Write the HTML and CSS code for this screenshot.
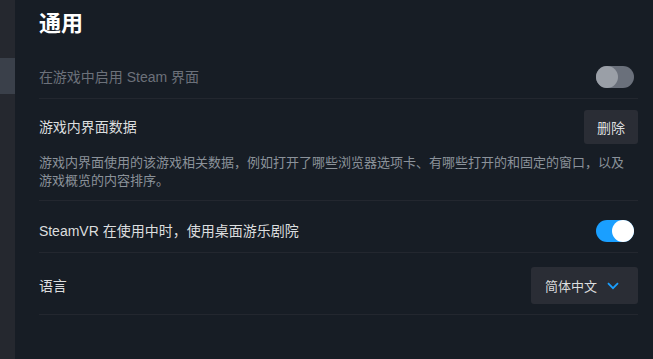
FILE: index.html
```html
<!DOCTYPE html>
<html lang="zh-CN">
<head>
    <meta charset="UTF-8">
    <meta name="viewport" content="width=device-width, initial-scale=1.0">
    <title>通用</title>
    <link rel="stylesheet" href="styles.css">
</head>
<body>
    <div class="layout">
        <aside class="sidebar">
            <div class="sidebar-item aktif"></div>
        </aside>

        <main class="konten">
            <h1 class="judul">通用</h1>

            <div class="baris baris-pertama">
                <div class="label redup">在游戏中启用 Steam 界面</div>
                <div class="sakelar mati"><span class="kenop"></span></div>
            </div>

            <div class="baris baris-data">
                <div class="baris-atas">
                    <div class="label">游戏内界面数据</div>
                    <button class="tombol">删除</button>
                </div>
                <p class="deskripsi">游戏内界面使用的该游戏相关数据，例如打开了哪些浏览器选项卡、有哪些打开的和固定的窗口，以及游戏概览的内容排序。</p>
            </div>

            <div class="baris baris-vr">
                <div class="label">SteamVR 在使用中时，使用桌面游乐剧院</div>
                <div class="sakelar nyala"><span class="kenop"></span></div>
            </div>

            <div class="baris baris-bahasa">
                <div class="label">语言</div>
                <div class="dropdown">
                    <span>简体中文</span>
                    <svg width="12" height="8" viewBox="0 0 12 8">
                        <path d="M1 1.2 L6 6.2 L11 1.2" fill="none" stroke="#1a9fff" stroke-width="1.8"/>
                    </svg>
                </div>
            </div>
        </main>
    </div>
</body>
</html>
```

FILE: styles.css
```css
body {
    margin: 0;
    padding: 0;
    background-color: #171d25;
    font-family: "Liberation Sans", "Noto Sans CJK SC", sans-serif;
    color: #dcdedf;
}
.layout {
    display: flex;
    min-height: 359px;
}
.sidebar {
    width: 18px;
    background-color: #25282f;
    padding-top: 58px;
    box-sizing: border-box;
}
.sidebar-item {
    height: 36px;
}
.sidebar-item.aktif {
    background-color: #3a404a;
}
.konten {
    flex-grow: 1;
    padding: 0 15px 0 24px;
}
.judul {
    margin: 0;
    padding-top: 10px;
    font-size: 22px;
    line-height: 28px;
    font-weight: bold;
    color: #ffffff;
    height: 46px;
}
.baris {
    display: flex;
    justify-content: space-between;
    align-items: center;
    border-bottom: 1px solid #23272f;
    padding-bottom: 10px;
}
.baris-pertama {
    padding-top: 10px;
}
.baris-data {
    display: block;
    padding-top: 11px;
}
.baris-vr {
    padding-top: 19px;
}
.baris-bahasa {
    padding-top: 14px;
    padding-bottom: 10px;
}
.baris-atas {
    display: flex;
    justify-content: space-between;
    align-items: center;
}
.label {
    font-size: 14px;
    line-height: 20px;
}
.label.redup {
    color: #6c717a;
}
.deskripsi {
    margin: 10px 0 0 0;
    font-size: 13px;
    line-height: 18px;
    color: #8b929a;
    padding-right: 10px;
}
.sakelar {
    width: 38px;
    height: 22px;
    border-radius: 11px;
    position: relative;
    margin-right: 4px;
}
.sakelar .kenop {
    position: absolute;
    top: 0;
    width: 22px;
    height: 22px;
    border-radius: 50%;
}
.sakelar.mati {
    background-color: #6a707b;
}
.sakelar.mati .kenop {
    left: 0;
    background-color: #9a9fa7;
}
.sakelar.nyala {
    background-color: #1a9fff;
}
.sakelar.nyala .kenop {
    right: 0;
    background-color: #ffffff;
}
.tombol {
    background-color: #2a2d35;
    border: none;
    border-radius: 3px;
    color: #dcdedf;
    font-family: "Liberation Sans", "Noto Sans CJK SC", sans-serif;
    font-size: 14px;
    width: 54px;
    height: 34px;
    padding: 0;
}
.dropdown {
    display: flex;
    align-items: center;
    gap: 10px;
    background-color: #2a2d35;
    border-radius: 3px;
    height: 37px;
    width: 107px;
    box-sizing: border-box;
    padding-left: 14px;
    font-size: 13px;
}
```
